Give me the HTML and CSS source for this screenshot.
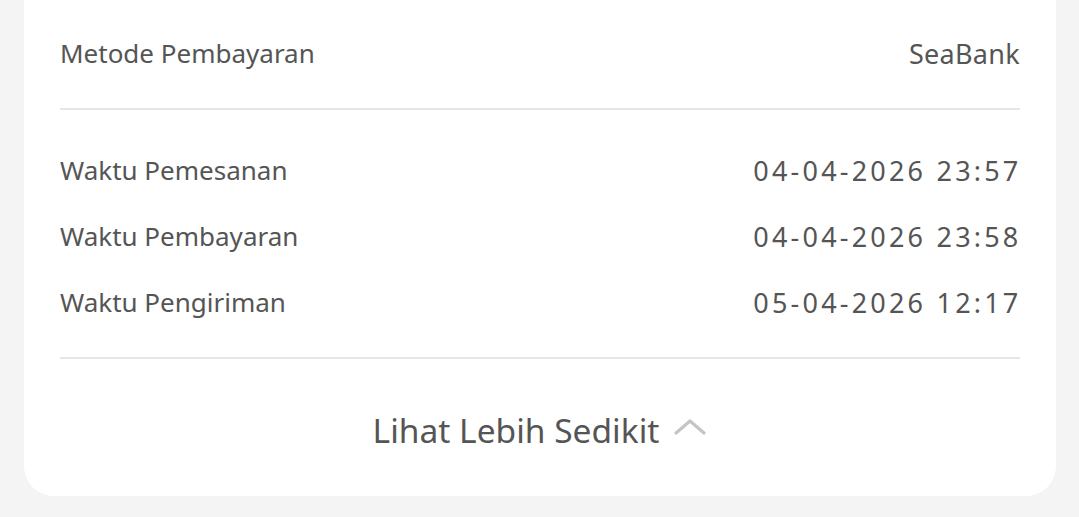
FILE: index.html
```html
<!DOCTYPE html>
<html lang="id">
<head>
<meta charset="utf-8">
<link rel="stylesheet" href="styles.css">
</head>
<body>
<div class="page">
  <section class="card">
    <div class="row row-top">
      <span class="label">Metode Pembayaran</span>
      <span class="value bank">SeaBank</span>
    </div>
    <div class="divider"></div>
    <div class="times">
      <div class="row">
        <span class="label">Waktu Pemesanan</span>
        <span class="value date">04-04-2026 23:57</span>
      </div>
      <div class="row">
        <span class="label">Waktu Pembayaran</span>
        <span class="value date">04-04-2026 23:58</span>
      </div>
      <div class="row">
        <span class="label">Waktu Pengiriman</span>
        <span class="value date">05-04-2026 12:17</span>
      </div>
    </div>
    <div class="divider"></div>
    <div class="footer">
      <span class="more">Lihat Lebih Sedikit</span>
      <svg class="chev" width="34" height="20" viewBox="0 0 34 20" aria-hidden="true">
        <path d="M3 16 L17 4 L31 16" fill="none" stroke="#c4c4c4" stroke-width="3.2" stroke-linecap="round" stroke-linejoin="round"/>
      </svg>
    </div>
  </section>
</div>
</body>
</html>
```

FILE: styles.css
```css
html, body {
  margin: 0;
  padding: 0;
  background: #f4f4f4;
}
body {
  font-family: "Noto Sans", "DejaVu Sans", sans-serif;
  color: #555555;
  width: 1079px;
  height: 517px;
  overflow: hidden;
}
.page {
  padding: 0 23px 21px 24px;
}
.card {
  background: #ffffff;
  border-radius: 0 0 30px 30px;
  padding: 0 36px;
  height: 496px;
  box-sizing: border-box;
  display: flex;
  flex-direction: column;
}
.row {
  display: flex;
  justify-content: space-between;
  align-items: center;
  height: 66px;
  font-size: 26px;
}
.row-top {
  height: 108px;
  padding-bottom: 2px;
  box-sizing: border-box;
}
.divider {
  height: 2px;
  background: #e6e6e6;
}
.times {
  padding: 27px 0 22px;
}
.bank {
  font-size: 27px;
  letter-spacing: 0.3px;
}
.date {
  font-size: 27px;
  letter-spacing: 3.2px;
  margin-right: -1.5px;
}
.footer {
  flex: 1;
  display: flex;
  justify-content: center;
  align-items: center;
  gap: 14px;
  padding-top: 4px;
}
.more {
  font-size: 33.5px;
}
.chev {
  margin-top: -6px;
}
```
